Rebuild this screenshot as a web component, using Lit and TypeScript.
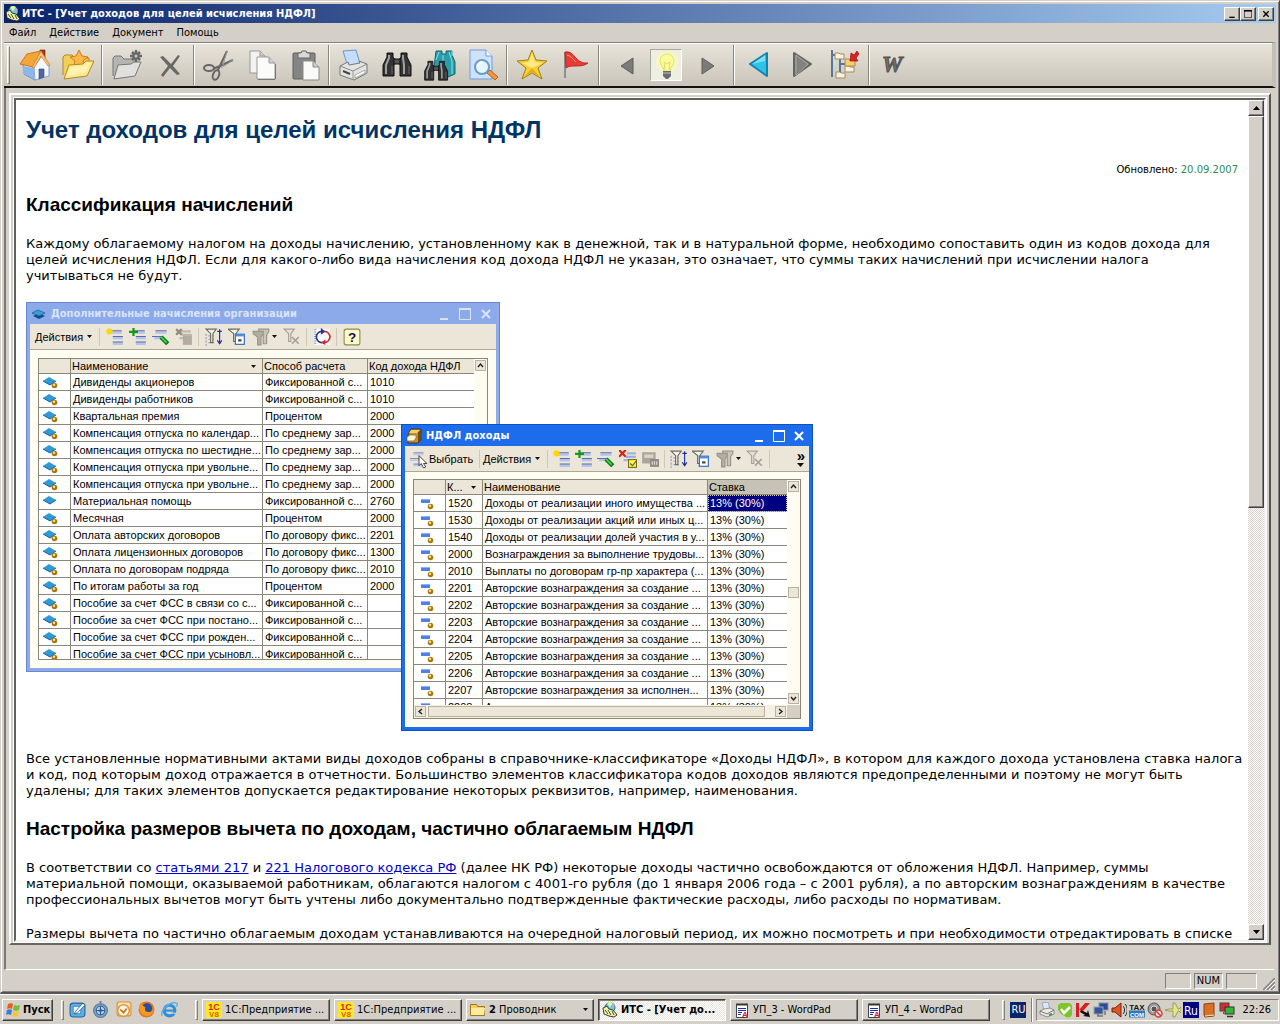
import { LitElement, html, css, nothing } from "lit";
import type { TemplateResult } from "lit";
import { customElement, property } from "lit/decorators.js";
import { classMap } from "lit/directives/class-map.js";

/* ---------- large toolbar icons, 32x32 ---------- */

const binoculars = html`<svg viewBox="0 0 32 32" width="32" height="32">
  <path d="M6 4h6v4l2 3v4h-1v12H2V16l4-8z" fill="#333" stroke="#111" />
  <path d="M26 4h-6v4l-2 3v4h1v12h11V16l-4-8z" fill="#333" stroke="#111" />
  <rect x="13" y="10" width="6" height="5" fill="#555" stroke="#111" />
  <path d="M8 6v3l-3 7v9M22 6v3l1 7v9" stroke="#a0a0a0" stroke-width="2" fill="none" />
  <path d="M11 17v8M28 17v8" stroke="#6a6a6a" fill="none" />
</svg>`;

const big: Record<string, TemplateResult> = {
  home: html`<svg width="32" height="32" viewBox="0 0 32 32">
    <path d="M21 1h5v9l-5-5z" fill="#a33a1c" stroke="#6d2412" stroke-width=".6" />
    <path d="M4 15L9 9l14-2 6 9v10l-13 5L5 25z" fill="#d9e9fb" stroke="#5b86c4" />
    <path d="M15 18L23 7l7 10v10l-14 4z" fill="#f4f9ff" stroke="#7ea4d8" />
    <path d="M4 17v7l11 6V19z" fill="#8bb6ee" />
    <path d="M8 5L22 2l-8 16L1 15z" fill="#f4a53a" stroke="#d0751a" />
    <path d="M22 2l9 14-2 1-7-10-7 12-2-1z" fill="#f9c271" stroke="#cf7a22" stroke-width=".7" />
    <path d="M20 20h5v8l-5 2z" fill="#54679c" stroke="#34457c" stroke-width=".6" />
  </svg>`,
  folderStar: html`<svg width="34" height="32" viewBox="0 0 34 32">
    <path d="M2 26V8l2-2h7l3 3h14v6" fill="#f1cf5c" stroke="#b88a18" />
    <path d="M18 1l3 6 6 1-5 4 2 7-6-3-6 3 2-7-5-4 6-1z" fill="#fbb648" stroke="#cd7c17" />
    <path d="M8 16l14-1 3-3h8l-7 15-23 3z" fill="#fdea92" stroke="#b88a18" />
    <path d="M9 18l14-1 3-3h4l-6 9-18 4z" fill="#fff6bf" opacity=".7" />
  </svg>`,
  folderNew: html`<svg width="34" height="32" viewBox="0 0 34 32">
    <path d="M3 27V9l2-2h6l3 3h12v5" fill="#b5b5b3" stroke="#777" />
    <path d="M8 16l13-1 3-2h7l-6 14-21 3z" fill="#e0e0de" stroke="#777" />
    <path d="M26 1v12M20 7h12M22 3l8 8M30 3l-8 8" stroke="#666" stroke-width="2.500" />
    <circle cx="26" cy="7" r="1.500" fill="#ccc" />
  </svg>`,
  remove: html`<svg width="32" height="32" viewBox="0 0 32 32">
    <path d="M6 8l3-1 8 8 7-9 2 1-7 10 7 8-3 1-7-7-7 9-2-2 7-9z" fill="#686865" />
  </svg>`,
  cut: html`<svg width="34" height="32" viewBox="0 0 34 32" fill="none" stroke="#666">
    <path d="M25 2L16 21M31 11L11 20" stroke-width="2" />
    <path d="M25 2l-4 14M31 11l-12 8" stroke="#999" />
    <ellipse cx="7" cy="19" rx="5" ry="3" stroke-width="2" />
    <ellipse cx="14" cy="26" rx="3" ry="5" stroke-width="2" transform="rotate(20 14 26)" />
  </svg>`,
  copy: html`<svg width="32" height="32" viewBox="0 0 32 32" stroke="#999">
    <path d="M4 2h10l5 5v17H4z" fill="#f2f2f0" /><path d="M14 2v5h5" fill="#ccc" />
    <path d="M11 8h12l6 6v16H11z" fill="#fbfbfa" /><path d="M23 8v6h6" fill="#d0d0ce" />
    <path d="M12 30.500h17M29.500 15v15" stroke="#777" />
  </svg>`,
  paste: html`<svg width="32" height="32" viewBox="0 0 32 32">
    <rect x="4" y="4" width="22" height="26" rx="1" fill="#858583" stroke="#5f5f5d" />
    <path d="M9 9V4h3l1-2h4l1 2h3v5z" fill="#d9d9d7" stroke="#666" />
    <path d="M14 12h10l6 6v13H14z" fill="#fafaf9" stroke="#8a8a88" />
    <path d="M24 12v6h6" fill="#ccc" stroke="#8a8a88" />
  </svg>`,
  print: html`<svg width="32" height="32" viewBox="0 0 32 32">
    <path d="M5 2l13-1 4 14-12 3z" fill="#c5ddfb" stroke="#6c95cf" />
    <path d="M2 17l8-4 1 3 11-2-1-2 8 3v9l-13 7L2 26z" fill="#e4e4e2" stroke="#77777a" />
    <path d="M2 17l13 5 14-7" fill="none" stroke="#8a8a8c" />
    <path d="M15 22v9" stroke="#999" />
    <path d="M17 26l10-5v3l-10 5z" fill="#fff" stroke="#888" stroke-width=".7" />
    <path d="M5 22l7 3" stroke="#444" stroke-width="2" />
  </svg>`,
  find: html`<svg width="32" height="32" viewBox="0 0 32 32">${binoculars}</svg>`,
  findAll: html`<svg width="32" height="32" viewBox="0 0 32 32">
    <path d="M12 2h6v3h4V2h6v4l3 7v12l-7 3-14-10z" fill="#2a9daa" stroke="#0e6672" />
    <path d="M15 3l-3 8M25 3l3 9v13M19 6v7M28 2v5" stroke="#8fe0e6" fill="none" />
    <g transform="translate(-1 9) scale(.82)">${binoculars}</g>
  </svg>`,
  preview: html`<svg width="32" height="32" viewBox="0 0 32 32">
    <path d="M3 1h16l6 6v23H3z" fill="#cfe2fc" stroke="#6d9de0" />
    <path d="M19 1v6h6" fill="#fff" stroke="#6d9de0" />
    <path d="M20 24l8 7 3-3-8-7z" fill="#f0973a" stroke="#b8651a" />
    <circle cx="15" cy="18" r="7" fill="#e6f6ff" stroke="#6a9ac8" stroke-width="2" />
    <path d="M11 17a4 4 0 0 1 4-4" stroke="#fff" stroke-width="2" fill="none" />
  </svg>`,
  star: html`<svg width="32" height="32" viewBox="0 0 32 32">
    <path d="M16 1l4 10 11 1-9 7 4 11-10-6-10 6 4-11-9-7 11-1z" fill="#f7cf35" stroke="#a17c17" stroke-linejoin="round" />
    <path d="M16 4l3 9 8 1-11 5zM16 19L6 14l7-1 3-9z" fill="#fff2a0" opacity=".75" />
    <path d="M16 19l8 9-8-5-8 5z" fill="#d99f1b" opacity=".7" />
  </svg>`,
  flag: html`<svg width="32" height="32" viewBox="0 0 32 32">
    <path d="M6 3v26" stroke="#8e8e94" stroke-width="2" />
    <path d="M6 3c6-1 8 3 12 7s7 4 11 4c-4 3-8 3-12 3s-7 0-10 2z" fill="#e53b35" stroke="#b31c1c" stroke-width=".8" />
    <path d="M8 6c4 1 6 4 9 7" stroke="#ff9a90" fill="none" />
  </svg>`,
  prevSmall: html`<svg width="32" height="32" viewBox="0 0 32 32">
    <path d="M13 17l12-8v16z" fill="#7b7b79" stroke="#5d5d5b" />
  </svg>`,
  bulb: html`<svg width="32" height="32" viewBox="0 0 32 32">
    <circle cx="16" cy="12" r="11" fill="#fafcb4" opacity=".6" />
    <path d="M9 11a7 7 0 0 1 14 0c0 5-4 5-4 10h-6c0-5-4-5-4-10z" fill="#fbfd9d" stroke="#e0e35f" />
    <path d="M14 20l-1-8 3 2 3-2-1 8" fill="none" stroke="#ddd95f" />
    <path d="M12 21h8v5l-3 3h-2l-3-3z" fill="#696c72" /><path d="M12 23h8" stroke="#bbb" />
  </svg>`,
  nextSmall: html`<svg width="32" height="32" viewBox="0 0 32 32">
    <path d="M20 17L8 9v16z" fill="#7b7b79" stroke="#5d5d5b" />
  </svg>`,
  back: html`<svg width="32" height="32" viewBox="0 0 32 32">
    <path d="M7 15L24 4v23z" fill="#2cc3ea" stroke="#1682ad" stroke-width="2" stroke-linejoin="round" />
    <path d="M9 15l13-9v6z" fill="#8fe9fb" opacity=".8" />
  </svg>`,
  forward: html`<svg width="32" height="32" viewBox="0 0 32 32">
    <path d="M25 15L8 4v23z" fill="#82827f" stroke="#656563" stroke-width="2" stroke-linejoin="round" />
    <path d="M10 6l12 9-12 11z" fill="none" stroke="#aaa" />
  </svg>`,
  tree: html`<svg width="32" height="32" viewBox="0 0 32 32">
    <path d="M3 1v27M3 6h4M11 10v17M11 15h8M13 26h-5" stroke="#55779a" stroke-width="2" fill="none" />
    <g fill="#f7f1df" stroke="#a58b5a"><path d="M6 4h4l1 1h4v5H6z" /><path d="M16 17h4l1 1h4v5h-9z" /><path d="M7 23h4l1 1h4v5H7z" /></g>
    <path d="M16 10h4l1 1h5v6H16z" fill="#f9cf68" stroke="#a58b5a" />
    <path d="M30 5l-3 4 2 3h-8l1-8 3 2 3-4z" fill="#e12222" stroke="#8f1010" stroke-width=".7" />
  </svg>`,
  word: html`<svg width="32" height="32" viewBox="0 0 32 32">
    <text x="4" y="23" font-family="Liberation Serif, serif" font-weight="bold" font-style="italic" font-size="23" fill="#6f6f6d" stroke="#525250">W</text>
  </svg>`,
};

/* ---------- 16x16 icons ---------- */

const lines = html`<svg width="16" height="16" viewBox="0 0 16 16">
  <path d="M4 2.500h10M6 7.500h9M6 12.500h9" stroke="#5b6ea4" stroke-width="1" />
  <path d="M4 4h10M6 9h9M6 14h9" stroke="#b4c2ee" stroke-width="2" />
</svg>`;

const small: Record<string, TemplateResult> = {
  add: html`<svg width="18" height="18" viewBox="0 0 16 16">${lines}
    <path d="M3 0v6M0 3h6M1 1l4 4M5 1L1 5" stroke="#ffd800" stroke-width="1.400" /></svg>`,
  addCopy: html`<svg width="18" height="18" viewBox="0 0 16 16">${lines}
    <path d="M4 0v7M0 3.500h8" stroke="#149a1a" stroke-width="2" /></svg>`,
  edit: html`<svg width="18" height="18" viewBox="0 0 16 16">
    <path d="M3 2.500h10M0 7.500h9" stroke="#5b6ea4" /><path d="M3 4h10M2 9h8" stroke="#b4c2ee" stroke-width="2" />
    <path d="M8 8l6 6" stroke="#0c7a16" stroke-width="4" /><path d="M8 8l5 5" stroke="#4fd45a" stroke-width="1.500" /></svg>`,
  delOff: html`<svg width="18" height="18" viewBox="0 0 16 16">
    <path d="M5 3h9M6 6h9M4 9h5" stroke="#bdb9ae" stroke-width="2" /><rect x="7" y="7" width="8" height="8" fill="#b0aca2" />
    <path d="M1 1l5 5M6 1L1 6" stroke="#8f8b82" stroke-width="2" /></svg>`,
  mark: html`<svg width="18" height="18" viewBox="0 0 16 16">
    <path d="M7 3h8M6 6h9M4 9h4" stroke="#9fb0e4" stroke-width="2" />
    <path d="M0 0l6 6M6 0L0 6" stroke="#d92217" stroke-width="2" />
    <rect x="8.500" y="8.500" width="7" height="7" fill="#fff64a" stroke="#77720c" /><path d="M10 12l2 2 3-4" stroke="#555" fill="none" /></svg>`,
  markOff: html`<svg width="18" height="18" viewBox="0 0 16 16">
    <rect x="1" y="2" width="12" height="10" fill="#aaa69c" /><rect x="3" y="4" width="8" height="3" fill="#dad5c9" />
    <rect x="8" y="8" width="8" height="7" fill="#8f8b82" /><path d="M10 10v3M12 10v3M14 10v3" stroke="#ddd" /></svg>`,
  filterSort: html`<svg width="18" height="18" viewBox="0 0 16 16">
    <path d="M1 5v11M3 7h5M3 10h5M3 13h5" stroke="#97a3c4" stroke-dasharray="2 1" />
    <path d="M1 1h9L7 5v8H5V5z" fill="#f4f1e6" stroke="#6b6b62" />
    <path d="M13 1v13M11 11l2 3 2-3M11 3h4" fill="none" stroke="#1c2f8e" /></svg>`,
  filterWin: html`<svg width="18" height="18" viewBox="0 0 16 16">
    <path d="M0 1h10L7 5v7H5V5z" fill="#f4f1e6" stroke="#6b6b62" />
    <rect x="6.500" y="5.500" width="8" height="9" fill="#fff" stroke="#2d65b5" /><path d="M7 6.500h7" stroke="#4b8ae0" stroke-width="2" />
    <path d="M9 11h3" stroke="#444" stroke-width="2" /></svg>`,
  filterOff: html`<svg width="18" height="18" viewBox="0 0 16 16">
    <path d="M6 1h9v2l-2 3v8h-3V6L6 3z" fill="#c9c5ba" stroke="#98948a" /><path d="M1 3h9v2L8 8v7H5V8L1 5z" fill="#b2aea3" stroke="#98948a" /></svg>`,
  filterClear: html`<svg width="18" height="18" viewBox="0 0 16 16">
    <path d="M1 1h9L7 5v7H5V5z" fill="#e6e1d5" stroke="#a5a197" /><path d="M8 8l6 6M14 8l-6 6" stroke="#a5a197" stroke-width="1.500" /></svg>`,
  refresh: html`<svg width="18" height="18" viewBox="0 0 16 16">
    <rect x="1" y="1" width="14" height="14" fill="#fff" /><path d="M2 1v14" stroke="#7e8fd4" stroke-width="2" stroke-dasharray="1 1" />
    <path d="M8 13a5 5 0 0 1 0-10" fill="none" stroke="#20368f" stroke-width="1.500" /><path d="M7 0l4 3-4 3z" fill="#20368f" />
    <path d="M10 3a5 5 0 0 1 0 10" fill="none" stroke="#cc2a32" stroke-width="1.500" /><path d="M11 10v5l-4-2z" fill="#cc2a32" /></svg>`,
  help: html`<svg width="18" height="18" viewBox="0 0 16 16">
    <rect x="1" y="1" width="14" height="14" rx="2" fill="#fdfbc4" stroke="#8c8a5c" />
    <text x="8" y="12" text-anchor="middle" font-family="Liberation Sans, sans-serif" font-weight="bold" font-size="12" fill="#101060">?</text></svg>`,
  choose: html`<svg width="18" height="18" viewBox="0 0 16 16">
    <path d="M3 2.500h9M0 7.500h9M3 12.500h9" stroke="#8090bd" /><path d="M3 4h9M0 9h8M3 14h9" stroke="#bfcbee" stroke-width="1.500" />
    <path d="M8 5v9l2-2 2 4 2-1-2-3h3z" fill="#fff" stroke="#333" stroke-width=".8" /></svg>`,
  diamonds: html`<svg width="14" height="14" viewBox="0 0 14 14">
    <path d="M1 9l6-3 6 3-6 3z" fill="#0f4f86" /><path d="M0 6l6-3 7 3-6 3z" fill="#3aa0dc" stroke="#14588e" stroke-width=".7" /></svg>`,
  stack: html`<svg width="16" height="16" viewBox="0 0 16 16">
    <path d="M5 1h10v11l-3 3H2V7z" fill="#c8912d" stroke="#4b3410" /><path d="M12 4v11l3-3V1z" fill="#6c4d17" />
    <path d="M5 2h9l-3 3H3z" fill="#f5cf6a" /><path d="M1 9l3-2h6v3l-2 3H1z" fill="#fff7da" stroke="#7a5f2a" stroke-width=".7" /></svg>`,
  its: html`<svg width="16" height="16" viewBox="0 0 16 16">
    <circle cx="8" cy="5.500" r="5" fill="#59d9dc" stroke="#222" stroke-width=".7" /><path d="M8 5.500L5 1a5 5 0 0 1 6 0z" fill="#d7f7a9" /><path d="M8 5.500l5-1a5 5 0 0 0-2-3z" fill="#c59be6" />
    <path d="M1 6l4-2 2 3 4 1 4 5-3 2-5-1-5-2z" fill="#f4efb0" stroke="#222" stroke-width=".9" /><path d="M3 8l3 4M6 8l3 5M10 9l2 4" stroke="#3d5c1e" /></svg>`,
  win: html`<svg width="17" height="16" viewBox="0 0 17 16">
    <path d="M3 2c2-1 4-1 5 0L7 7c-2-1-3-1-5 0z" fill="#ea5a24" /><path d="M9 3c2 1 4 1 6 0l-1 5c-2 1-4 1-6 0z" fill="#6fbf3c" />
    <path d="M2 8c2-1 3-1 5 0l-1 5c-2-1-4-1-5 0z" fill="#3d78dc" /><path d="M8 9c2 1 4 1 6 0l-1 5c-2 1-4 1-6 0z" fill="#f7c52d" /></svg>`,
  desktop: html`<svg width="17" height="17" viewBox="0 0 16 16">
    <rect x="1" y="2" width="14" height="13" rx="3" fill="#5fb0e6" stroke="#1c649d" /><path d="M4 5h7v7H4z" fill="#eaf5ff" stroke="#1c649d" stroke-width=".6" />
    <path d="M6 10l7-8 2 2-7 7-3 1z" fill="#fff" stroke="#1c649d" stroke-width=".8" /></svg>`,
  compass: html`<svg width="17" height="17" viewBox="0 0 16 16">
    <circle cx="8" cy="9" r="6.500" fill="#7ca3cb" stroke="#56779d" /><circle cx="8" cy="9" r="4" fill="#b9d3ea" stroke="#3a638f" />
    <path d="M8 4l1 5-1 5-1-5zM3 9l5-1 5 1-5 1z" fill="#2c5c92" /><rect x="7" y="0" width="2" height="3" fill="#6a88aa" /></svg>`,
  outlook: html`<svg width="17" height="17" viewBox="0 0 16 16">
    <rect x="2" y="1" width="13" height="13" rx="2" fill="#fbe1b4" stroke="#d58f35" /><circle cx="8" cy="9" r="5.500" fill="#fff7e4" stroke="#e09a3c" stroke-width="1.500" />
    <path d="M5 8l3 3 3-4" fill="none" stroke="#bd7015" stroke-width="1.500" /></svg>`,
  firefox: html`<svg width="17" height="17" viewBox="0 0 16 16">
    <circle cx="8" cy="8" r="7.500" fill="#e8741c" /><circle cx="8.500" cy="7" r="4.800" fill="#274f9e" />
    <path d="M1 4c0 7 3 10 8 10 4 0 6-4 6-7-1 3-4 4-6 3-2 0-3-2-2-4L4 4 3 1z" fill="#f39b21" /></svg>`,
  ie: html`<svg width="17" height="17" viewBox="0 0 16 16">
    <circle cx="8" cy="9" r="5" fill="none" stroke="#2f8fdc" stroke-width="3" /><path d="M4 9h9" stroke="#2f8fdc" stroke-width="2" />
    <path d="M10 11h6v1h-6z" fill="#d4d0c8" /><path d="M1 14C-1 9 8 0 15 2c1 1 0 3-1 3" fill="none" stroke="#55b1ef" stroke-width="1.300" /></svg>`,
  onec: html`<svg width="16" height="16" viewBox="0 0 16 16">
    <rect width="16" height="16" fill="#ffe926" />
    <text x="8" y="8" text-anchor="middle" font-family="Liberation Sans, sans-serif" font-weight="bold" font-size="9" fill="#d81e1e">1С</text>
    <text x="8" y="15" text-anchor="middle" font-family="Liberation Sans, sans-serif" font-weight="bold" font-size="8" fill="#e05a16">V8</text></svg>`,
  folder: html`<svg width="16" height="16" viewBox="0 0 16 16">
    <path d="M.5 13.500v-11h6l1 2h7v9z" fill="#f3cf60" stroke="#9c7a1c" /><path d="M1 6h14l-1 7H1z" fill="#fdeb9f" /></svg>`,
  wordpad: html`<svg width="16" height="16" viewBox="0 0 16 16">
    <path d="M2.500 2.500h11v13h-11z" fill="#fff" stroke="#444" /><path d="M3 1v3M5 1v3M7 1v3M9 1v3M11 1v3M13 1v3" stroke="#222" stroke-width=".9" />
    <path d="M4 6.500h8M4 8.500h8M4 10.500h4M4 12.500h3" stroke="#1e2eb0" stroke-width="1.200" />
    <text x="8" y="15" font-family="Liberation Sans, sans-serif" font-weight="bold" font-size="8" fill="#d8202a">A</text></svg>`,
};

const tray: Record<string, TemplateResult> = {
  "Принтер": html`<svg width="16" height="16" viewBox="0 0 16 16">
    <path d="M3 1l6-1 2 7-6 1z" fill="#d8e8fb" stroke="#7e97ba" stroke-width=".7" /><path d="M1 9l4-2 6-1 4 2v4l-7 3-7-3z" fill="#eceae6" stroke="#777" stroke-width=".8" /><path d="M1 9l7 3 7-4" fill="none" stroke="#777" /><path d="M10 13l3-1" stroke="#3a9a4a" stroke-width="2" /></svg>`,
  "Сообщения": html`<svg width="16" height="16" viewBox="0 0 16 16">
    <path d="M4 1h7a4 4 0 0 1 4 4v6a4 4 0 0 1-6 4l-5-3-3-4V3z" fill="#7cc62c" /><path d="M4 7l3 4 6-6" fill="none" stroke="#fff" stroke-width="2.500" /></svg>`,
  "Антивирус": html`<svg width="16" height="16" viewBox="0 0 16 16">
    <path d="M1 1h3v14H1zM4 8l6-7h5L8 9z" fill="#d81e1e" /><path d="M6 8l6 3 1-3 2 7-7-1 2-1-5-3z" fill="#111" /></svg>`,
  "Сеть": html`<svg width="16" height="16" viewBox="0 0 16 16">
    <rect x="6" y="1" width="9" height="7" fill="#2a4a9a" stroke="#8a8f9b" /><rect x="1" y="5" width="9" height="7" fill="#33569f" stroke="#9aa0ac" /><path d="M4 14h6M5 12v2M12 9v4" stroke="#777" stroke-width="1.500" /></svg>`,
  "Звук": html`<svg width="16" height="16" viewBox="0 0 16 16">
    <path d="M1 6h3l6-5v14l-6-5H1z" fill="#df5428" stroke="#76230c" /><path d="M12 4c2 2 2 6 0 8M14 2c3 3 3 9 0 12" fill="none" stroke="#222" /></svg>`,
  "TaxCom": html`<svg width="16" height="16" viewBox="0 0 16 16">
    <text x="8" y="7.500" text-anchor="middle" font-family="Liberation Sans, sans-serif" font-weight="bold" font-size="8" fill="#111">TAX</text>
    <rect y="8.500" width="16" height="7" fill="#2f79b8" /><text x="8" y="14.500" text-anchor="middle" font-family="Liberation Sans, sans-serif" font-weight="bold" font-size="6" fill="#fff">COM</text></svg>`,
  "Камера": html`<svg width="16" height="16" viewBox="0 0 16 16">
    <circle cx="7" cy="7" r="6" fill="#9b9b9b" stroke="#555" /><circle cx="7" cy="7" r="3" fill="#555" stroke="#ddd" /><circle cx="11.500" cy="11.500" r="3.500" fill="#f4d8d4" stroke="#d5443c" stroke-width="1.500" /><path d="M9 9l5 5" stroke="#d5443c" stroke-width="1.500" /></svg>`,
  "Самолёт": html`<svg width="16" height="16" viewBox="0 0 16 16">
    <path d="M0 8l4-1 4 0 0-6h2l3 6h1l2-2v6l-2-2h-1l-3 6H8l0-6H4z" fill="#e3e58a" stroke="#8f9140" stroke-width=".8" /></svg>`,
  "Язык": html`<svg width="16" height="16" viewBox="0 0 16 16">
    <rect width="16" height="16" fill="#000082" /><text x="8" y="12.500" text-anchor="middle" font-family="DejaVu Sans Condensed, sans-serif" font-size="12" fill="#fff">Ru</text></svg>`,
  "Словарь": html`<svg width="16" height="16" viewBox="0 0 16 16">
    <path d="M3 2l10-1v13l-9 1-1-2z" fill="#d9702a" stroke="#8e3f10" /><path d="M4 14l9-1" stroke="#f5e6cf" /></svg>`,
  "Мониторы": html`<svg width="16" height="16" viewBox="0 0 16 16">
    <rect x="1" y="1" width="9" height="8" fill="#d92b2b" stroke="#444" /><rect x="6" y="5" width="9" height="7" fill="#38b338" stroke="#333" /><path d="M8 14.500h6M4 11h1" stroke="#333" stroke-width="1.500" /></svg>`,
};

const dropArrow = html`<svg width="5" height="3" viewBox="0 0 5 3"><path d="M0 0h5L2.500 3z" fill="#111" /></svg>`;
const moreArrow = html`<svg width="7" height="4" viewBox="0 0 7 4"><path d="M0 0h7L3.500 4z" fill="#111" /></svg>`;
const winGlyph = {
  min: html`<svg width="12" height="12" viewBox="0 0 12 12"><path d="M2 11h8" stroke="currentColor" stroke-width="2" /></svg>`,
  max: html`<svg width="12" height="12" viewBox="0 0 12 12"><path d="M.5 1.500h11v10H.5z" fill="none" stroke="currentColor" /><path d="M0 1h12" stroke="currentColor" stroke-width="2" /></svg>`,
  close: html`<svg width="12" height="12" viewBox="0 0 12 12"><path d="M2 2l8 8M10 2l-8 8" stroke="currentColor" stroke-width="2" /></svg>`,
};

/* ---------- shared rules ---------- */

const base = css`
  * { box-sizing: border-box; }
  button { font: inherit; color: inherit; background: none; border: 0; padding: 0; margin: 0; }
  svg { display: block; flex: none; }
  .ui { font-family: "DejaVu Sans Condensed", "Liberation Sans", sans-serif; font-size: 11px; }
`;

interface Column { title: string; width: number; sorted?: boolean; current?: boolean; }
type Tool = { icon: string; label: string; drop?: boolean } | "sep";

/* A catalogue window of the accounting program. */
@customElement("catalog-window")
class CatalogWindow extends LitElement {
  @property() heading = "";
  @property() icon = "diamonds";
  @property({ type: Boolean }) active = false;
  @property({ type: Boolean }) chooser = false;
  @property({ attribute: false }) columns: Column[] = [];
  @property({ attribute: false }) rows: string[][] = [];
  @property({ attribute: false }) tools: Tool[] = [];

  static styles = [base, css`
    :host { display: block; font-family: "Liberation Sans", sans-serif; font-size: 11px; line-height: 16px; color: #000; }
    .win { height: 100%; display: flex; flex-direction: column; background: #fffdf1; border: 4px solid #8ca9ea; border-top: 0; outline: 1px solid #6a87ce; outline-offset: -1px; }
    .win.active { border-color: #1d6cec; outline-color: #0b52c8; }
    .title { display: flex; align-items: center; gap: 5px; height: 22px; padding: 2px 2px 0 2px; background: #8ca9ea; color: #d9e4fb; font-weight: bold; font-family: "DejaVu Sans Condensed", sans-serif; }
    .active .title { gap: 4px; padding-left: 1px; background: #1d6cec; color: #fff; }
    .title span { flex: 1; }
    .title button { width: 16px; height: 16px; display: grid; place-items: center; }
    .tools { display: flex; align-items: center; height: 26px; padding-left: 5px; background: #ece6d9; border-bottom: 1px solid #aca899; }
    .tools .cmd { display: flex; align-items: center; gap: 4px; height: 22px; min-width: 61px; white-space: nowrap; }
    .tools .pick { gap: 1px; min-width: 66px; }
    .tool { display: flex; align-items: center; justify-content: center; width: 23px; height: 22px; }
    .active .tool { width: 22px; }
    .tools .tool.drop { width: 32px; gap: 2px; }
    .sep { width: 1px; height: 18px; margin: 0 3px; background: #cfc8b6; }
    .more { margin-left: auto; padding-right: 4px; display: grid; justify-items: center; gap: 3px; line-height: 9px; font-weight: bold; font-size: 15px; }
    .frame { flex: 1; min-height: 0; margin: 8px; border: 1px solid #8a8678; display: grid; grid-template-columns: 1fr 13px; grid-template-rows: 1fr auto; background: #fffdf1; }
    .active .frame { margin-top: 7px; }
    .rows { overflow: hidden; height: 0; min-height: 100%; }
    table { width: 100%; table-layout: fixed; border-spacing: 0; }
    th, td { height: 17px; padding: 0 0 0 2px; line-height: 16px; text-align: left; font-weight: normal; white-space: nowrap; overflow: hidden; border-right: 1px solid #8a8678; border-bottom: 1px solid #8a8678; }
    th { height: 15px; line-height: 14px; padding-left: 1px; background: #ece6d9; }
    td { background: #fff; }
    th:last-child, td:last-child { border-right: 0; }
    .head { display: flex; align-items: center; justify-content: space-between; padding-right: 6px; }
    th.current { background: #c6c2b5; }
    td.selected { background: #000080; color: #fff; outline: 1px dotted #ccc; outline-offset: -1px; }
    td svg { margin-left: 2px; }
    .active td svg { margin-left: 5px; }
    .vbar { display: flex; flex-direction: column; justify-content: space-between; background: #fffdf1; padding: 1px; }
    .hbar { display: flex; background: #f5f1e3; height: 13px; padding: 1px; gap: 2px; }
    .arrow, .thumb { display: grid; place-items: center; width: 11px; height: 11px; background: #ece6d9; border: 1px solid #b8b2a0; }
    .hbar .thumb { flex: 1; margin-right: 8px; }
    .corner { background: #d4cfc1; }
  `];

  private rowIcon(ball: boolean) {
    return this.active
      ? html`<svg width="16" height="14" viewBox="0 0 16 14"><path d="M0 3h9v4H0z" fill="#4f80e4" /><path d="M0 3.500h9" stroke="#8cb1f8" /><circle cx="9.500" cy="10.500" r="2.800" fill="#a87612" /><circle cx="9" cy="9.800" r="1.200" fill="#ffe183" /></svg>`
      : html`<svg width="16" height="14" viewBox="0 0 16 14"><path d="M0 6l6-4 7 4-6 4z" fill="#2f9ad6" /><path d="M0 6l7 4 6-4" fill="none" stroke="#155f96" />${ball
          ? html`<svg><circle cx="11.500" cy="10.500" r="2.800" fill="#a87612" /><circle cx="11" cy="9.800" r="1.200" fill="#ffe183" /></svg>` : nothing}</svg>`;
  }

  private arrow(d: string, label: string) {
    return html`<button class="arrow" aria-label=${label}><svg width="7" height="7" viewBox="0 0 7 7"><path d=${d} fill="none" stroke="#222" stroke-width="1.400" /></svg></button>`;
  }

  render() {
    return html`<div class=${classMap({ win: true, active: this.active })}>
      <header class="title">${small[this.icon]}<span>${this.heading}</span>
        <button aria-label="Свернуть">${winGlyph.min}</button>
        <button aria-label="Развернуть">${winGlyph.max}</button>
        <button aria-label="Закрыть">${winGlyph.close}</button>
      </header>
      <div class="tools">
        ${this.chooser ? html`<button class="cmd pick">${small.choose}Выбрать</button><i class="sep"></i>` : nothing}
        <button class="cmd">Действия ${dropArrow}</button><i class="sep"></i>
        ${this.tools.map(t => t === "sep" ? html`<i class="sep"></i>`
          : html`<button class=${classMap({ tool: true, drop: !!t.drop })} aria-label=${t.label}>${small[t.icon]}${t.drop ? dropArrow : nothing}</button>`)}
        ${this.chooser ? html`<button class="more" aria-label="Ещё"><span>»</span>${moreArrow}</button>` : nothing}
      </div>
      <div class="frame">
        <div class="rows"><table>
          <colgroup>${this.columns.map(c => html`<col style="width:${c.width}px" />`)}</colgroup>
          <thead><tr>${this.columns.map(c => html`<th class=${classMap({ current: !!c.current })}><div class="head">${c.title}${c.sorted ? dropArrow : nothing}</div></th>`)}</tr></thead>
          <tbody>${this.rows.map((r, i) => html`<tr><td>${this.rowIcon(r[0] !== "Материальная помощь")}</td>
            ${r.map((v, j) => html`<td class=${classMap({ selected: this.active && i === 0 && j === r.length - 1 })}>${v}</td>`)}</tr>`)}</tbody>
        </table></div>
        <div class="vbar">
          ${this.arrow("M1 5l2.500-3L6 5", "Вверх")}
          ${this.active ? html`<i class="thumb"></i>${this.arrow("M1 2l2.500 3L6 2", "Вниз")}` : nothing}
        </div>
        ${this.active ? html`<div class="hbar">${this.arrow("M5 1L2 3.500 5 6", "Влево")}<i class="thumb"></i>${this.arrow("M2 1l3 2.500L2 6", "Вправо")}</div><div class="corner"></div>` : nothing}
      </div>
    </div>`;
  }
}

const accruals: string[][] = [
  ["Дивиденды акционеров", "Фиксированной с...", "1010"],
  ["Дивиденды работников", "Фиксированной с...", "1010"],
  ["Квартальная премия", "Процентом", "2000"],
  ["Компенсация отпуска по календар...", "По среднему зар...", "2000"],
  ["Компенсация отпуска по шестидне...", "По среднему зар...", "2000"],
  ["Компенсация отпуска при увольне...", "По среднему зар...", "2000"],
  ["Компенсация отпуска при увольне...", "По среднему зар...", "2000"],
  ["Материальная помощь", "Фиксированной с...", "2760"],
  ["Месячная", "Процентом", "2000"],
  ["Оплата авторских договоров", "По договору фикс...", "2201"],
  ["Оплата лицензионных договоров", "По договору фикс...", "1300"],
  ["Оплата по договорам подряда", "По договору фикс...", "2010"],
  ["По итогам работы за год", "Процентом", "2000"],
  ["Пособие за счет ФСС в связи со с...", "Фиксированной с...", ""],
  ["Пособие за счет ФСС при постано...", "Фиксированной с...", ""],
  ["Пособие за счет ФСС при рожден...", "Фиксированной с...", ""],
  ["Пособие за счет ФСС при усыновл...", "Фиксированной с...", ""],
];

const incomes: string[][] = [
  ["1520", "Доходы от реализации иного имущества ..."],
  ["1530", "Доходы от реализации акций или иных ц..."],
  ["1540", "Доходы от реализации долей участия в у..."],
  ["2000", "Вознаграждения за выполнение трудовы..."],
  ["2010", "Выплаты по договорам гр-пр характера (..."],
  ["2201", "Авторские вознаграждения за создание ..."],
  ["2202", "Авторские вознаграждения за создание ..."],
  ["2203", "Авторские вознаграждения за создание ..."],
  ["2204", "Авторские вознаграждения за создание ..."],
  ["2205", "Авторские вознаграждения за создание ..."],
  ["2206", "Авторские вознаграждения за создание ..."],
  ["2207", "Авторские вознаграждения за исполнен..."],
  ["2208", "Авторские вознаграждения за создание ..."],
].map(r => [...r, "13% (30%)"]);

const filterTools: Tool[] = [
  { icon: "filterSort", label: "Отбор и сортировка" },
  { icon: "filterWin", label: "Отбор по значению" },
  { icon: "filterOff", label: "История отборов", drop: true },
  { icon: "filterClear", label: "Отключить отбор" },
  "sep",
];
const editTools: Tool[] = [
  { icon: "add", label: "Добавить" },
  { icon: "addCopy", label: "Добавить копированием" },
  { icon: "edit", label: "Изменить" },
];

const toolbar: [string, string][][] = [
  [["home", "Начало"], ["folderStar", "Избранное"]],
  [["folderNew", "Новая папка"], ["remove", "Удалить"]],
  [["cut", "Вырезать"], ["copy", "Копировать"], ["paste", "Вставить"]],
  [["print", "Печать"], ["find", "Найти"], ["findAll", "Поиск по базе"], ["preview", "Просмотр"]],
  [["star", "В избранное"], ["flag", "Закладка"]],
  [["prevSmall", "Предыдущее"], ["bulb", "Подсветка"], ["nextSmall", "Следующее"]],
  [["back", "Назад"], ["forward", "Вперёд"], ["tree", "Показать в дереве"]],
  [["word", "Открыть в Word"]],
];

const tasks = [
  { icon: "onec", text: html`1С:Предприятие ...` },
  { icon: "onec", text: html`1С:Предприятие ...` },
  { icon: "folder", text: html`<b>2</b> Проводник`, group: true },
  { icon: "its", text: html`ИТС - [Учет до...`, active: true },
  { icon: "wordpad", text: html`УП_3 - WordPad` },
  { icon: "wordpad", text: html`УП_4 - WordPad` },
];

@customElement("app-root")
class AppRoot extends LitElement {
  static styles = [base, css`
    :host { display: block; height: 100vh; color: #000; }
    .desk { height: 100%; display: flex; flex-direction: column; background: #d4d0c8; overflow: hidden; }
    .window { flex: 1; min-height: 0; display: flex; flex-direction: column; padding: 2px; border: 1px solid #d4d0c8; border-right-color: #404040; border-bottom: 2px solid #555; box-shadow: inset 1px 1px #fff, inset -1px -1px #808080; }
    .caption { display: flex; align-items: center; gap: 1px; height: 19px; margin: 1px 1px 0; padding: 0 2px 0 1px; background: linear-gradient(90deg, #0a246a, #a6caf0); color: #fff; font-weight: bold; }
    .caption h1 { flex: 1; margin: 0; font-size: 11px; }
    .raised { background: #d4d0c8; border: 1px solid; border-color: #fff #404040 #404040 #fff; box-shadow: inset -1px -1px #808080; color: #000; }
    .caption .raised { width: 16px; height: 14px; display: grid; place-items: center; }
    .caption .raised svg { width: 8px; height: 8px; }
    .pair { display: flex; margin-right: 1px; }
    .menu { display: flex; height: 19px; padding: 0 6px; gap: 13px; align-items: center; }
    .toolbar { display: flex; align-items: center; height: 46px; margin: 0 1px; padding-left: 9px; border-top: 1px solid #808080; border-bottom: 2px solid #111; border-right: 4px solid #c4c0b8; box-shadow: inset 0 1px #fff; background: linear-gradient(#e8e4da, #c9c5bb); }
    .grip { width: 3px; height: 38px; margin-left: -6px; margin-right: 3px; border: 1px solid; border-color: #fff #808080 #808080 #fff; }
    .group { display: flex; align-items: center; }
    .group button { width: 43px; height: 38px; display: grid; place-items: center; }
    .group .pressed { width: 32px; height: 32px; margin: 0 6px 0 5px; background: #efeee2; border: 1px solid; border-color: #aaa69c #fff #fff #aaa69c; }
    .divider { width: 2px; height: 40px; margin: 0 2px; background: linear-gradient(90deg, #8a867e 50%, #fff 50%); }
    .client { flex: 1; min-height: 0; margin: 0 3px 0 1px; display: flex; border-left: 2px solid #777; border-bottom: 1px solid #fff; padding: 5px 3px 24px 3px; }
    .sheet { flex: 1; min-width: 0; display: flex; border: 2px solid; border-color: #fff #555 #666 #fff; padding: 3px 3px 1px; }
    .well { flex: 1; min-width: 0; display: flex; border: 2px solid; border-color: #606060 #f4f2ee #f4f2ee #606060; outline: 1px solid #fff; background: #fff; }
    .doc { flex: 1; min-width: 0; overflow: hidden; padding: 16px 2px 0 10px; font-family: "DejaVu Sans", sans-serif; font-size: 13px; line-height: 16px; }
    .doc h2 { margin: 0; font: bold 24px/28px "Liberation Sans", sans-serif; color: #003366; }
    .doc h3 { margin: 0 0 19px; font: bold 19px/24px "Liberation Sans", sans-serif; }
    .doc p { margin: 0 0 18px; }
    .doc a { color: #0000cc; }
    .doc .date { margin: 20px 8px 17px 0; text-align: right; font-size: 10px; line-height: 12px; }
    .date time { color: #2e8b57; }
    .shot { position: relative; height: 430px; margin: 0 0 19px; }
    .one { position: absolute; left: 0; top: 0; width: 474px; height: 370px; }
    .two { position: absolute; left: 375px; top: 122px; width: 412px; height: 307px; }
    .scroll { width: 16px; display: flex; flex-direction: column; background: repeating-conic-gradient(#fff 0 25%, #d4d0c8 0 50%) 0 0 / 2px 2px; }
    .scroll button { height: 16px; flex: none; display: grid; place-items: center; }
    .scroll .thumb { height: 392px; }
    .space { flex: 1; }
    .status { height: 20px; display: flex; align-items: center; justify-content: flex-end; gap: 3px; padding: 2px 2px 0 0; }
    .status span { height: 16px; min-width: 26px; padding: 0 2px; line-height: 14px; border: 1px solid; border-color: #808080 #fff #fff #808080; }
    .status .last { min-width: 31px; }
    .status svg { margin-left: 3px; align-self: flex-end; }
    .taskbar { height: 30px; flex: none; display: flex; align-items: center; border-top: 1px solid #fff; padding: 0 1px 0 2px; }
    .start { height: 22px; width: 51px; display: flex; align-items: center; gap: 1px; padding: 0 2px; font-weight: bold; }
    .rail { flex: none; width: 3px; height: 20px; margin: 0 5px 0 8px; border: 1px solid; border-color: #fff #808080 #808080 #fff; }
    .quick { display: flex; gap: 6px; width: 118px; }
    .tasks { flex: 1; min-width: 0; display: flex; gap: 4px; margin-left: -1px; }
    .task { flex: 0 1 128px; min-width: 0; height: 22px; display: flex; align-items: center; gap: 3px; padding: 0 1px 0 3px; text-align: left; white-space: nowrap; overflow: hidden; }
    .task span { flex: 1; overflow: hidden; }
    .task > svg:last-child { margin-right: 4px; }
    .task.down { font-weight: bold; border-color: #404040 #fff #fff #404040; box-shadow: inset 1px 1px #808080; background: repeating-conic-gradient(#fff 0 25%, #e6e3dd 0 50%) 0 0 / 2px 2px; }
    .lang { width: 16px; height: 16px; line-height: 16px; text-align: center; background: #0a246a; color: #fff; }
    .tray { display: flex; align-items: center; gap: 2px; height: 22px; padding: 0 7px 0 2px; border: 1px solid; border-color: #808080 #fff #fff #808080; }
    .tray time { margin-left: 5px; }
    .edge { width: 2px; height: 24px; margin: 0 3px 0 5px; border-left: 1px solid #808080; border-right: 1px solid #fff; }
  `];

  render() {
    return html`<div class="desk ui">
      <div class="window">
        <header class="caption">${small.its}<h1>ИТС - [Учет доходов для целей исчисления НДФЛ]</h1>
          <div class="pair"><button class="raised" aria-label="Свернуть">${winGlyph.min}</button><button class="raised" aria-label="Развернуть">${winGlyph.max}</button></div>
          <button class="raised" aria-label="Закрыть">${winGlyph.close}</button>
        </header>
        <nav class="menu"><button>Файл</button><button>Действие</button><button>Документ</button><button>Помощь</button></nav>
        <div class="toolbar"><i class="grip"></i>
          ${toolbar.map((g, i) => html`${i ? html`<i class="divider"></i>` : nothing}<div class="group">${g.map(([icon, label]) =>
            html`<button class=${classMap({ pressed: icon === "bulb" })} aria-label=${label} title=${label}>${big[icon]}</button>`)}</div>`)}
        </div>
        <main class="client"><div class="sheet"><div class="well">
          <article class="doc">
            <h2>Учет доходов для целей исчисления НДФЛ</h2>
            <p class="date">Обновлено: <time datetime="2007-09-20">20.09.2007</time></p>
            <h3>Классификация начислений</h3>
            <p>Каждому облагаемому налогом на доходы начислению, установленному как в денежной, так и в натуральной форме, необходимо сопоставить один из кодов дохода для целей исчисления НДФЛ. Если для какого-либо вида начисления код дохода НДФЛ не указан, это означает, что суммы таких начислений при исчислении налога<br />учитываться не будут.</p>
            <figure class="shot">
              <catalog-window class="one" heading="Дополнительные начисления организации" icon="diamonds"
                .columns=${[{ title: "", width: 32 }, { title: "Наименование", width: 192, sorted: true }, { title: "Способ расчета", width: 105 }, { title: "Код дохода НДФЛ", width: 106 }]}
                .rows=${accruals}
                .tools=${[...editTools, { icon: "delOff", label: "Удалить" }, "sep", ...filterTools, { icon: "refresh", label: "Обновить" }, "sep", { icon: "help", label: "Справка" }]}></catalog-window>
              <catalog-window class="two" heading="НДФЛ доходы" icon="stack" active chooser
                .columns=${[{ title: "", width: 32 }, { title: "К...", width: 37, sorted: true }, { title: "Наименование", width: 225 }, { title: "Ставка", width: 79, current: true }]}
                .rows=${incomes}
                .tools=${[...editTools, { icon: "mark", label: "Пометить на удаление" }, { icon: "markOff", label: "Записать" }, "sep", ...filterTools]}></catalog-window>
            </figure>
            <p>Все установленные нормативными актами виды доходов собраны в справочнике-классификаторе «Доходы НДФЛ», в котором для каждого дохода установлена ставка налога и код, под которым доход отражается в отчетности. Большинство элементов классификатора кодов доходов являются предопределенными и поэтому не могут быть<br />удалены; для таких элементов допускается редактирование некоторых реквизитов, например, наименования.</p>
            <h3>Настройка размеров вычета по доходам, частично облагаемым НДФЛ</h3>
            <p>В соответствии со <a href="#217">статьями 217</a> и <a href="#221">221 Налогового кодекса РФ</a> (далее НК РФ) некоторые доходы частично освобождаются от обложения НДФЛ. Например, суммы<br />материальной помощи, оказываемой работникам, облагаются налогом с 4001-го рубля (до 1 января 2006 года – с 2001 рубля), а по авторским вознаграждениям в качестве<br />профессиональных вычетов могут быть учтены либо документально подтвержденные фактические расходы, либо расходы по нормативам.</p>
            <p>Размеры вычета по частично облагаемым доходам устанавливаются на очередной налоговый период, их можно посмотреть и при необходимости отредактировать в списке</p>
          </article>
          <div class="scroll">
            <button class="raised" aria-label="Вверх"><svg width="7" height="4" viewBox="0 0 7 4"><path d="M0 4h7L3.500 0z" /></svg></button>
            <i class="raised thumb"></i><i class="space"></i>
            <button class="raised" aria-label="Вниз"><svg width="7" height="4" viewBox="0 0 7 4"><path d="M0 0h7L3.500 4z" /></svg></button>
          </div>
        </div></div></main>
        <footer class="status"><span></span><span>NUM</span><span class="last"></span>
          <svg width="12" height="12" viewBox="0 0 12 12"><path d="M0 12L12 0M4 12l8-8M8 12l4-4" stroke="#808080" stroke-width="1.500" /><path d="M2 12L12 2M6 12l6-6M10 12l2-2" stroke="#fff" /></svg>
        </footer>
      </div>
      <footer class="taskbar">
        <button class="raised start">${small.win}Пуск</button>
        <i class="rail"></i>
        <div class="quick">${["desktop", "compass", "outlook", "firefox", "ie"].map(n => html`<button aria-label=${n}>${small[n]}</button>`)}</div>
        <i class="rail"></i>
        <div class="tasks">${tasks.map(t => html`<button class=${classMap({ raised: true, task: true, down: !!t.active })}>${small[t.icon]}<span>${t.text}</span>${t.group ? dropArrow : nothing}</button>`)}</div>
        <i class="rail"></i><span class="lang">RU</span><i class="edge"></i>
        <div class="tray">${Object.entries(tray).map(([label, icon]) => html`<button aria-label=${label}>${icon}</button>`)}<time>22:26</time></div>
      </footer>
    </div>`;
  }
}
